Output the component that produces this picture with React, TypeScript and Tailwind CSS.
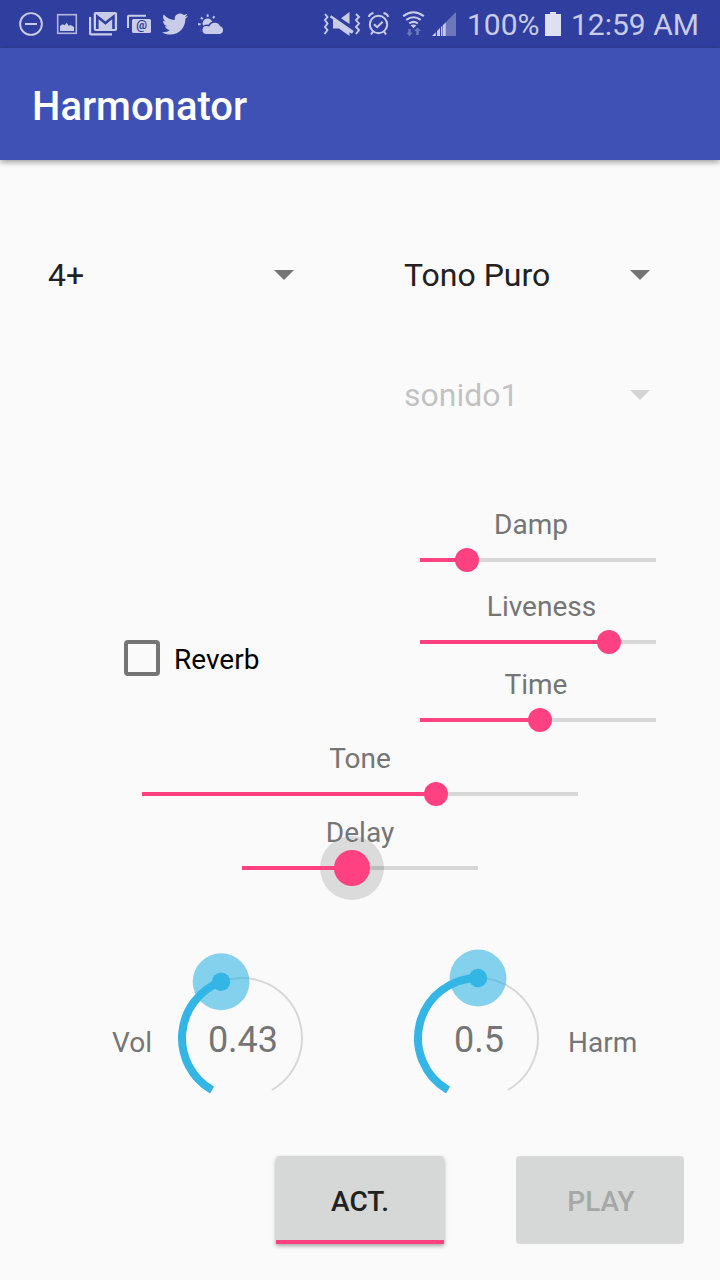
import { ReactNode } from "react";
import { FaTwitter } from "react-icons/fa";

const TONE = "#c8cce8";

function StatusIcon({ x, w, children }: { x: number; w: number; children: ReactNode }) {
  return (
    <svg width={w} height={48} viewBox={`${x} 0 ${w} 48`} className="shrink-0" fill={TONE}>
      {children}
    </svg>
  );
}

function StatusBar() {
  return (
    <div className="flex h-12 items-center bg-[#303f9f] pl-[15px] text-[#c8cce8]">
      <StatusIcon x={15} w={36}>
        <circle cx="31" cy="24" r="10.9" fill="none" stroke={TONE} strokeWidth="1.9" />
        <rect x="25" y="23" width="12" height="2" />
      </StatusIcon>
      <StatusIcon x={51} w={32}>
        <rect x="57.7" y="14.7" width="18.6" height="18.6" fill="none" stroke={TONE} strokeOpacity="0.85" strokeWidth="1.6" />
        <path d="M60 31V26l2.5-1.8 2 1 2.2-2.4 2 3 2-.8 3.3 2V31z" />
      </StatusIcon>
      <StatusIcon x={83} w={40}>
        <path d="M89 17h2.2v16.3H112V35.6H91q-2 0-2-2z" />
        <rect x="93.7" y="12" width="23.4" height="19" rx="2" />
        <path d="M97.3 29V16.6l8.1 6.4 8.1-6.4V29" fill="none" stroke="#303f9f" strokeWidth="2.6" />
      </StatusIcon>
      <StatusIcon x={123} w={35}>
        <path d="M127 28V16.6q0-1.8 1.8-1.8H146v1.9h-17V28z" />
        <rect x="132" y="19" width="19" height="14" rx="1.5" />
        <text x="141.6" y="29.2" textAnchor="middle" fontFamily="Roboto" fontSize="12" fontWeight="700" fill="#303f9f">@</text>
      </StatusIcon>
      <div className="flex w-[34px] shrink-0 pl-[4px]">
        <FaTwitter size={26} />
      </div>
      <StatusIcon x={192} w={131}>
        <g stroke={TONE} strokeWidth="1.9">
          <path d="M207.5 14.4l.3 2.5M201 17.5l1.7 1.7M198 24.2h2.6M201.2 31.4l1.8-1.8M214.5 16.2l-1.5 2" />
        </g>
        <circle cx="207.6" cy="23.6" r="5" />
        <path d="M206.5 34a4 4 0 0 1 0-8q1.5-.1 2.8.6a5.9 5.9 0 0 1 10.8-.4 4 4 0 0 1-.4 7.8z" stroke="#303f9f" strokeWidth="3" />
        <path d="M206.5 34a4 4 0 0 1 0-8q1.5-.1 2.8.6a5.9 5.9 0 0 1 10.8-.4 4 4 0 0 1-.4 7.8z" />
      </StatusIcon>
      <StatusIcon x={323} w={41}>
        <path d="M325 14l2.5 3-2.5 3 2.5 3.5-2.5 3.5 2.5 3-3 4M356 14l3 3-3 3 3 3.5-3 3.5 3 3-3 4" fill="none" stroke={TONE} strokeWidth="1.9" />
        <path d="M341 18.2L349.5 12v12z" />
        <path d="M333 17.5l20 14.5-1.2 1.7-2.3-1.5v3.8l-10.5-7.5h-6z" />
        <path d="M330.5 16.2l22.5 15.8" stroke={TONE} strokeWidth="2.4" />
      </StatusIcon>
      <StatusIcon x={364} w={33}>
        <g fill="none" stroke={TONE} strokeWidth="2">
          <circle cx="378.5" cy="24.5" r="8.7" />
          <path d="M374 24.2l3.2 3 5.4-5.4" />
          <path d="M368.7 16.8q1.2-3.2 4.8-3.8M388.3 16.8q-1.2-3.2-4.8-3.8M373 31.5l-2 3M384 31.5l2 3" />
        </g>
      </StatusIcon>
      <StatusIcon x={397} w={33}>
        <g fill="none" stroke={TONE} strokeWidth="2.1">
          <path d="M403.2 16.1q10.3-7.6 20.6 0M406.3 19.9q7.2-5.2 14.4 0M409.2 23.4q4.3-3 8.6 0" />
        </g>
        <path d="M410.6 25.2q2.9-1.2 5.8 0l-2.9 3z" />
        <path d="M408.3 29h2.4v3.8h2l-3.2 3.4-3.2-3.4h2zM416.2 35h2.6v-4h2.1l-3.4-3.4-3.4 3.4h2.1z" fillOpacity=".4" />
      </StatusIcon>
      <StatusIcon x={430} w={37}>
        <path d="M446 22L456 12v24h-10z" fillOpacity=".4" />
        <path d="M432 36l4-4v4zM437 31l3-3V36H437zM441 27l4.8-4.8V36H441z" />
        <path d="M436.3 28v8M440.5 25v11" stroke="#303f9f" strokeWidth="1" />
        <path d="M442.5 25v11" stroke="#303f9f" strokeWidth=".6" />
      </StatusIcon>
      <span className="w-[78px] pt-[2px] font-[Roboto] text-[30px] leading-[46px] whitespace-nowrap">100%</span>
      <StatusIcon x={545} w={26}>
        <path d="M545 14h5v-2h6v2h5v22h-16z" fill="#dde0f1" />
      </StatusIcon>
      <span className="pt-[2px] font-[Roboto] text-[30px] leading-[46px] whitespace-nowrap">12:59 AM</span>
    </div>
  );
}

function Spinner({ label, disabled = false }: { label: string; disabled?: boolean }) {
  return (
    <div className={disabled ? "flex w-[246px] items-center justify-between opacity-25" : "flex w-[246px] items-center justify-between"}>
      <span className="text-[32px] leading-10 text-[#212121]">{label}</span>
      <svg width="20" height="10" viewBox="0 0 20 10" fill={disabled ? "#616161" : "#757575"}>
        <path d="M0 0h20L10 10z" />
      </svg>
    </div>
  );
}

type SliderProps = { label: string; width: number; value: number; inset?: string; pressed?: boolean };

function Slider({ label, width, value, inset = "", pressed = false }: SliderProps) {
  return (
    <div className="flex flex-col items-center">
      <span className={`relative z-10 text-[28px] leading-[38px] text-[#757575] ${inset}`}>{label}</span>
      <div className="relative flex h-8 items-center" style={{ width }}>
        <div className="relative z-10 h-1 bg-[#ff4081]" style={{ width: value }} />
        <div className="h-1 flex-1 bg-[#d7d7d7]" />
        <div className="absolute top-1/2 flex size-0 items-center justify-center" style={{ left: value }}>
          {pressed && <div className="absolute size-16 rounded-full bg-black/12" />}
          <div className={pressed ? "absolute size-9 rounded-full bg-[#ff4081]" : "absolute size-6 rounded-full bg-[#ff4081]"} />
        </div>
      </div>
    </div>
  );
}

function Knob({ value }: { value: number }) {
  const point = (degrees: number) => {
    const a = (degrees * Math.PI) / 180;
    return { x: 80 + 60 * Math.cos(a), y: 90 + 60 * Math.sin(a) };
  };
  const start = point(120);
  const end = point(420);
  const thumb = point(120 + 300 * value);
  return (
    <div className="relative flex h-[180px] w-[160px] items-center justify-center">
      <svg width="160" height="180" viewBox="0 0 160 180" className="absolute inset-0" fill="none">
        <path d={`M${start.x} ${start.y}A60 60 0 1 1 ${end.x} ${end.y}`} stroke="#d7d7d7" strokeWidth="2" />
        <path d={`M${start.x} ${start.y}A60 60 0 0 1 ${thumb.x} ${thumb.y}`} stroke="#33b5e5" strokeWidth="8" />
        <circle cx={thumb.x} cy={thumb.y} r="28.4" fill="#33b5e5" fillOpacity=".6" />
        <circle cx={thumb.x} cy={thumb.y} r="9.2" fill="#33b5e5" />
      </svg>
      <span className="relative pt-1 pl-[2px] text-[36px] leading-[42px] text-[#757575]">{value.toFixed(2).replace(/0$/, "")}</span>
    </div>
  );
}

export default function App() {
  return (
    <div className="flex h-[1280px] w-[720px] flex-col overflow-hidden bg-[#fafafa] font-[Roboto,sans-serif]">
      <StatusBar />
      <header className="flex h-28 shrink-0 items-center bg-[#3f51b5] pt-[6px] pl-8 shadow-[0_2px_6px_rgba(0,0,0,0.4)]">
        <h1 className="text-[40px] font-medium text-white">Harmonator</h1>
      </header>

      <main className="flex flex-1 flex-col pt-[55px]">
        <div className="flex h-[120px] items-center gap-[110px] pl-12">
          <Spinner label="4+" />
          <Spinner label="Tono Puro" />
        </div>
        <div className="flex h-[120px] items-center pl-[404px]">
          <Spinner label="sonido1" disabled />
        </div>

        <div className="mt-[51px] flex h-[230px] justify-between pr-16 pl-[124px]">
          <label className="mt-[133px] flex h-10 items-center gap-[14px] text-[28px] text-black">
            <span className="mb-[2px] size-9 rounded-[4px] border-4 border-[#757575]" />
            <span className="pt-[2px]">Reverb</span>
          </label>
          <div className="flex flex-col">
            <Slider label="Damp" width={236} value={47} inset="pr-[14px]" />
            <div className="mt-3 mb-2">
              <Slider label="Liveness" width={236} value={189} inset="pl-[7px]" />
            </div>
            <Slider label="Time" width={236} value={120} inset="pr-[4px]" />
          </div>
        </div>
        <div className="mt-1 flex flex-col items-center gap-1">
          <Slider label="Tone" width={436} value={294} />
          <Slider label="Delay" width={236} value={110} pressed />
        </div>

        <div className="mt-16 flex h-[180px] items-center pl-[112px] text-[28px] text-[#757575]">
          <span className="w-[50px] pt-[10px]">Vol</span>
          <Knob value={0.432} />
          <div className="w-[76px]" />
          <Knob value={0.5} />
          <span className="pt-[10px] pl-[10px]">Harm</span>
        </div>

        <div className="mt-[28px] flex justify-end gap-[72px] pr-9 text-[28px] font-medium">
          <button className="h-[88px] w-[168px] rounded-t-[4px] border-b-4 border-[#ff4081] bg-[#d6d7d7] pt-[7px] text-[#212121] shadow-[0_2px_4px_rgba(0,0,0,0.35)]">ACT.</button>
          <button className="h-[88px] w-[168px] rounded-[4px] bg-[#d6d7d7] pt-[4px] pl-[2px] text-[#a6a7a7]" disabled>PLAY</button>
        </div>
      </main>
    </div>
  );
}
